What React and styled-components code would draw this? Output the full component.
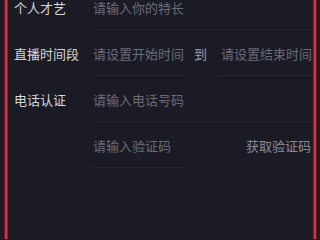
import React from 'react';
import styled, { createGlobalStyle } from 'styled-components';

const GlobalStyle = createGlobalStyle`
    html, body {
        margin: 0;
        padding: 0;
        background: #1a1b25;
        overflow: hidden;
    }
    body {
        font-family: "Noto Sans CJK SC", "Noto Sans", sans-serif;
    }
`;

const Frame = styled.div`
    height: 239px;
    margin: 0 4px 0 5px;
    border-left: 2px solid #d8303f;
    border-right: 2px solid #d8303f;
    box-shadow: 0 0 0 1px #6a1826, inset 1px 0 0 #8c2231, inset -1px 0 0 #8c2231;
    background: #1a1b25;
    box-sizing: border-box;
    overflow: hidden;
`;

const Form = styled.div`
    margin-top: -16px;
    padding: 0 1px 0 7px;
`;

const Row = styled.div`
    display: grid;
    grid-template-columns: 79px 1fr;
    align-items: start;
`;

const Label = styled.div`
    padding-top: 14px;
    font-size: 13px;
    line-height: 20px;
    color: #d6d6db;
    white-space: nowrap;
`;

const Fields = styled.div`
    display: flex;
    align-items: flex-start;
`;

const Field = styled.div`
    width: ${p => (p.$width ? `${p.$width}px` : 'auto')};
    flex: ${p => (p.$width ? 'none' : '1')};
    padding: 14px 0 11px ${p => (p.$inset ? '3px' : '0')};
    font-size: 13px;
    line-height: 20px;
    color: #6a6c78;
    border-bottom: 1px solid #252733;
    white-space: nowrap;
`;

const Sep = styled.span`
    width: 35px;
    flex: none;
    padding-top: 14px;
    font-size: 13px;
    line-height: 20px;
    color: #9a9ca6;
    text-align: center;
`;

const Action = styled.span`
    flex: 1;
    padding: 14px 2px 0 0;
    font-size: 13px;
    line-height: 20px;
    color: #8a8c96;
    text-align: right;
`;

export default function App() {
    return (
        <>
            <GlobalStyle />
            <Frame>
                <Form>
                    <Row>
                        <Label>个人才艺</Label>
                        <Fields>
                            <Field>请输入你的特长</Field>
                        </Fields>
                    </Row>
                    <Row>
                        <Label>直播时间段</Label>
                        <Fields>
                            <Field $width={90}>请设置开始时间</Field>
                            <Sep>到</Sep>
                            <Field $inset>请设置结束时间</Field>
                        </Fields>
                    </Row>
                    <Row>
                        <Label>电话认证</Label>
                        <Fields>
                            <Field>请输入电话号码</Field>
                        </Fields>
                    </Row>
                    <Row>
                        <Label />
                        <Fields>
                            <Field $width={90}>请输入验证码</Field>
                            <Action>获取验证码</Action>
                        </Fields>
                    </Row>
                </Form>
            </Frame>
        </>
    );
}
